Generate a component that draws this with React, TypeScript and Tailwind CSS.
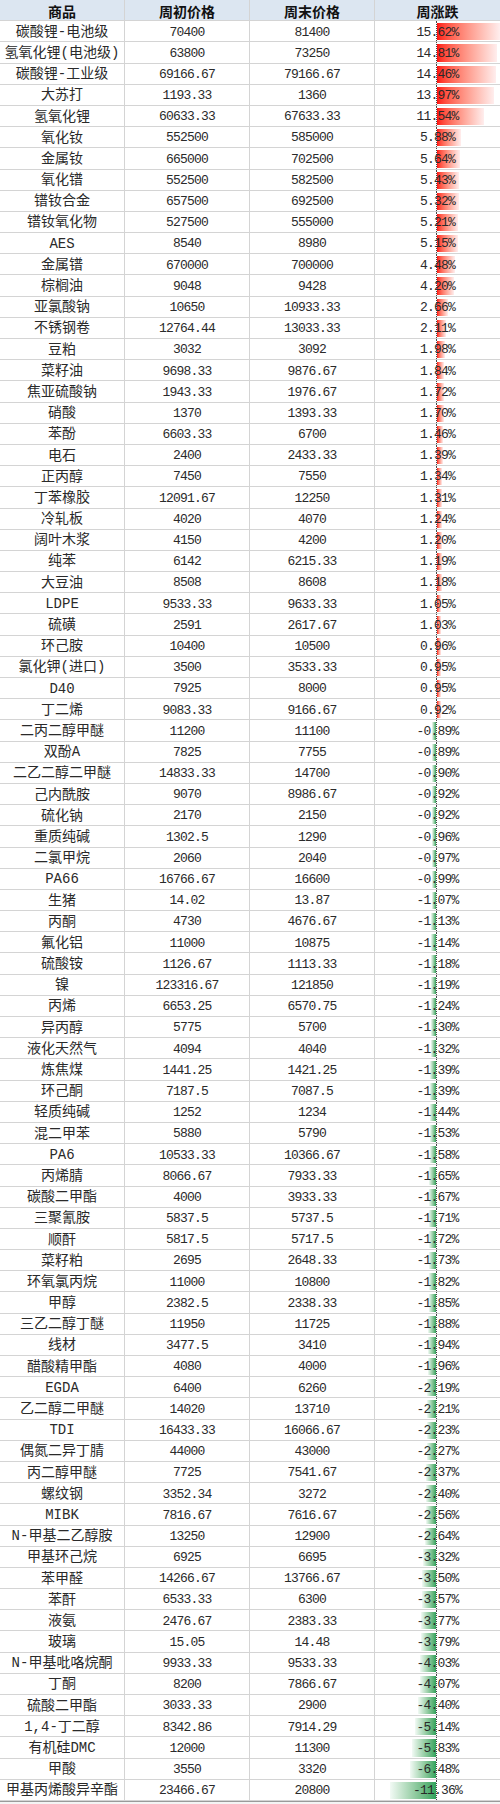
type Row = [string, string, string, number]

const rows: Row[] = [
  ['碳酸锂-电池级', '70400', '81400', 15.62],
  ['氢氧化锂(电池级)', '63800', '73250', 14.81],
  ['碳酸锂-工业级', '69166.67', '79166.67', 14.46],
  ['大苏打', '1193.33', '1360', 13.97],
  ['氢氧化锂', '60633.33', '67633.33', 11.54],
  ['氧化钕', '552500', '585000', 5.88],
  ['金属钕', '665000', '702500', 5.64],
  ['氧化镨', '552500', '582500', 5.43],
  ['镨钕合金', '657500', '692500', 5.32],
  ['镨钕氧化物', '527500', '555000', 5.21],
  ['AES', '8540', '8980', 5.15],
  ['金属镨', '670000', '700000', 4.48],
  ['棕榈油', '9048', '9428', 4.2],
  ['亚氯酸钠', '10650', '10933.33', 2.66],
  ['不锈钢卷', '12764.44', '13033.33', 2.11],
  ['豆粕', '3032', '3092', 1.98],
  ['菜籽油', '9698.33', '9876.67', 1.84],
  ['焦亚硫酸钠', '1943.33', '1976.67', 1.72],
  ['硝酸', '1370', '1393.33', 1.7],
  ['苯酚', '6603.33', '6700', 1.46],
  ['电石', '2400', '2433.33', 1.39],
  ['正丙醇', '7450', '7550', 1.34],
  ['丁苯橡胶', '12091.67', '12250', 1.31],
  ['冷轧板', '4020', '4070', 1.24],
  ['阔叶木浆', '4150', '4200', 1.2],
  ['纯苯', '6142', '6215.33', 1.19],
  ['大豆油', '8508', '8608', 1.18],
  ['LDPE', '9533.33', '9633.33', 1.05],
  ['硫磺', '2591', '2617.67', 1.03],
  ['环己胺', '10400', '10500', 0.96],
  ['氯化钾(进口)', '3500', '3533.33', 0.95],
  ['D40', '7925', '8000', 0.95],
  ['丁二烯', '9083.33', '9166.67', 0.92],
  ['二丙二醇甲醚', '11200', '11100', -0.89],
  ['双酚A', '7825', '7755', -0.89],
  ['二乙二醇二甲醚', '14833.33', '14700', -0.9],
  ['己内酰胺', '9070', '8986.67', -0.92],
  ['硫化钠', '2170', '2150', -0.92],
  ['重质纯碱', '1302.5', '1290', -0.96],
  ['二氯甲烷', '2060', '2040', -0.97],
  ['PA66', '16766.67', '16600', -0.99],
  ['生猪', '14.02', '13.87', -1.07],
  ['丙酮', '4730', '4676.67', -1.13],
  ['氟化铝', '11000', '10875', -1.14],
  ['硫酸铵', '1126.67', '1113.33', -1.18],
  ['镍', '123316.67', '121850', -1.19],
  ['丙烯', '6653.25', '6570.75', -1.24],
  ['异丙醇', '5775', '5700', -1.3],
  ['液化天然气', '4094', '4040', -1.32],
  ['炼焦煤', '1441.25', '1421.25', -1.39],
  ['环己酮', '7187.5', '7087.5', -1.39],
  ['轻质纯碱', '1252', '1234', -1.44],
  ['混二甲苯', '5880', '5790', -1.53],
  ['PA6', '10533.33', '10366.67', -1.58],
  ['丙烯腈', '8066.67', '7933.33', -1.65],
  ['碳酸二甲酯', '4000', '3933.33', -1.67],
  ['三聚氰胺', '5837.5', '5737.5', -1.71],
  ['顺酐', '5817.5', '5717.5', -1.72],
  ['菜籽粕', '2695', '2648.33', -1.73],
  ['环氧氯丙烷', '11000', '10800', -1.82],
  ['甲醇', '2382.5', '2338.33', -1.85],
  ['三乙二醇丁醚', '11950', '11725', -1.88],
  ['线材', '3477.5', '3410', -1.94],
  ['醋酸精甲酯', '4080', '4000', -1.96],
  ['EGDA', '6400', '6260', -2.19],
  ['乙二醇二甲醚', '14020', '13710', -2.21],
  ['TDI', '16433.33', '16066.67', -2.23],
  ['偶氮二异丁腈', '44000', '43000', -2.27],
  ['丙二醇甲醚', '7725', '7541.67', -2.37],
  ['螺纹钢', '3352.34', '3272', -2.4],
  ['MIBK', '7816.67', '7616.67', -2.56],
  ['N-甲基二乙醇胺', '13250', '12900', -2.64],
  ['甲基环己烷', '6925', '6695', -3.32],
  ['苯甲醛', '14266.67', '13766.67', -3.5],
  ['苯酐', '6533.33', '6300', -3.57],
  ['液氨', '2476.67', '2383.33', -3.77],
  ['玻璃', '15.05', '14.48', -3.79],
  ['N-甲基吡咯烷酮', '9933.33', '9533.33', -4.03],
  ['丁酮', '8200', '7866.67', -4.07],
  ['硫酸二甲酯', '3033.33', '2900', -4.4],
  ['1,4-丁二醇', '8342.86', '7914.29', -5.14],
  ['有机硅DMC', '12000', '11300', -5.83],
  ['甲酸', '3550', '3320', -6.48],
  ['甲基丙烯酸异辛酯', '23466.67', '20800', -11.36],
]

// px of bar per percent point
const SCALE = 4.05

const cell = 'flex items-center justify-center border-r border-b border-[#d4d4d4] pt-[2px]'
const num = "font-['Liberation_Mono','Noto_Sans_CJK_SC',monospace] text-[13px] tracking-[-0.8px] text-[#2a2a2a]"
const head = 'bg-[#dce6f1] text-[14px] font-bold text-[#111]'

export default function App() {
  return (
    <div className="w-[500px] bg-white">
      <div className="grid h-[1801px] grid-cols-[125px_125px_125px_125px] grid-rows-[repeat(85,minmax(0,1fr))] font-['Noto_Sans_CJK_SC',sans-serif]">
        <div className={`${cell} ${head}`}>商品</div>
        <div className={`${cell} ${head}`}>周初价格</div>
        <div className={`${cell} ${head}`}>周末价格</div>
        <div className={`${cell} border-r-0 ${head}`}>周涨跌</div>
        {rows.map((r) => (
          <PriceRow key={r[0]} row={r} />
        ))}
      </div>
      <div className="h-[3px] border-t border-[#9a9a9a] bg-[#f4f4f4]" />
    </div>
  )
}

function PriceRow({ row }: { row: Row }) {
  const [name, start, end, pct] = row
  const w = Math.abs(pct) * SCALE
  return (
    <>
      <div className={`${cell} whitespace-nowrap font-['Liberation_Mono','Noto_Sans_CJK_SC',sans-serif] text-[14px] text-[#2a2a2a]`}>
        {name}
      </div>
      <div className={`${cell} ${num}`}>{start}</div>
      <div className={`${cell} ${num}`}>{end}</div>
      <div className={`${cell} relative border-r-0 ${num}`}>
        {pct > 0 ? (
          <div
            className="absolute top-[2px] bottom-[1px] left-[62px] bg-linear-to-r from-[#ff0d0d] to-[#ffeeee]"
            style={{ width: w }}
          />
        ) : (
          <div
            className="absolute top-[2px] bottom-[1px] right-[64px] bg-linear-to-r from-[#f2faf5] to-[#2ea35c]"
            style={{ width: w }}
          />
        )}
        <div className="absolute top-0 bottom-0 left-[61px] border-l border-dotted border-[#444]" />
        <span className="relative">{pct.toFixed(2)}%</span>
      </div>
    </>
  )
}
